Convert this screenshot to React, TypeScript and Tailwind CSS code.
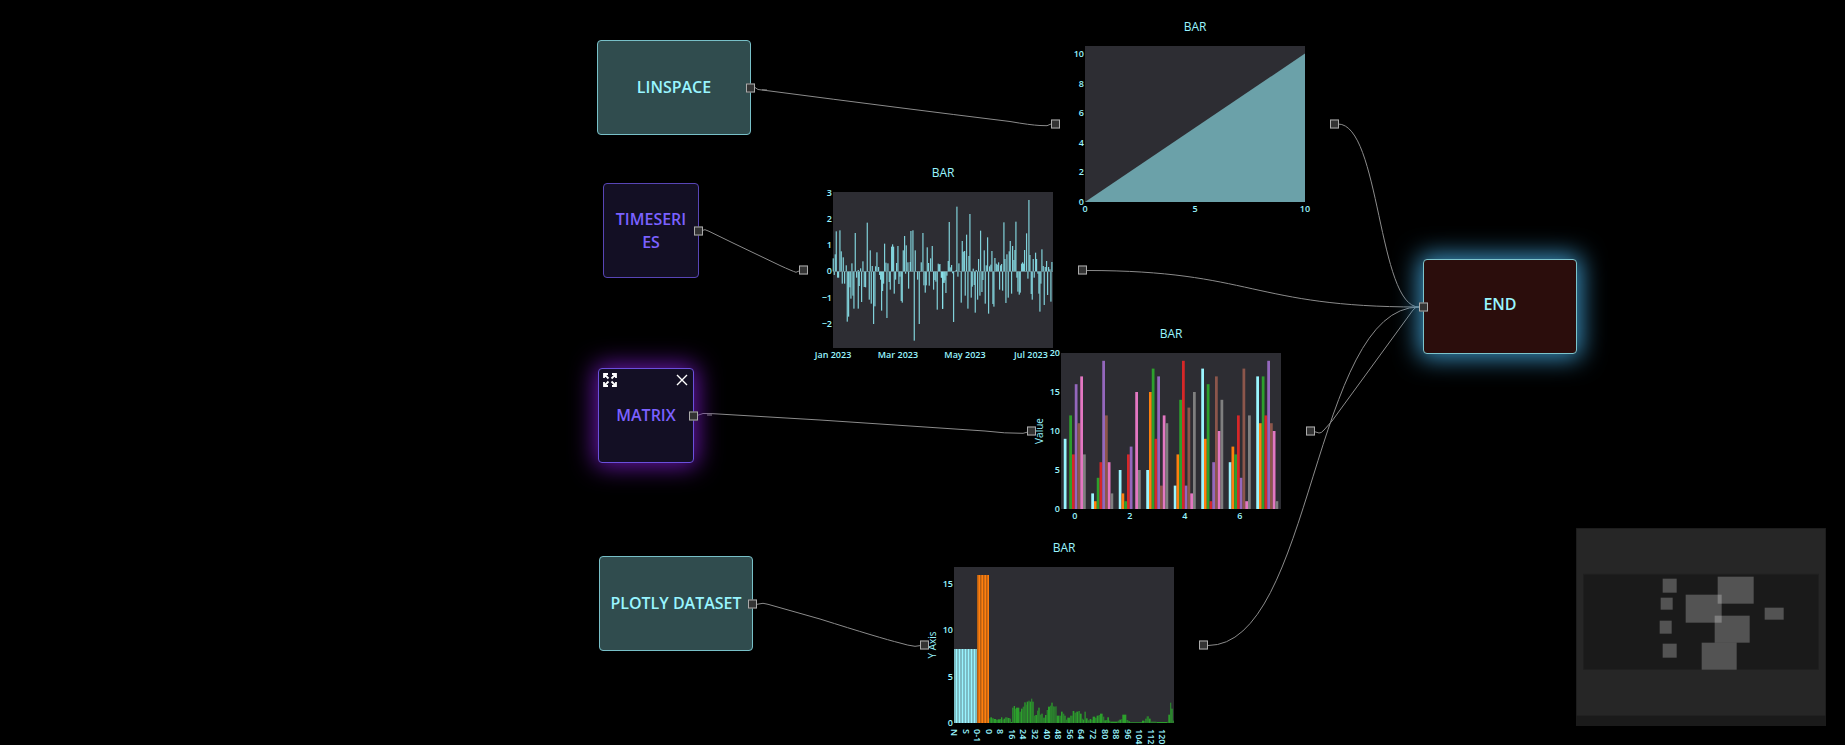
import type { ReactNode } from "react";

type Pair = [number, number];

const PLOT_W = 220;
const PLOT_H = 156;
const PLOT_X = 29;
const PLOT_Y = 27;

const palette = ["#99f5ff", "#ff7f0e", "#2ca02c", "#d62728", "#9467bd", "#8c564b", "#e377c2", "#7f7f7f"];

const matrix = [
  [9, 0, 12, 7, 16, 11, 17, 7],
  [2, 1, 4, 6, 19, 12, 6, 2],
  [5, 2, 1, 7, 8, 0, 15, 5],
  [5, 15, 18, 9, 17, 3, 12, 11],
  [3, 7, 14, 19, 3, 13, 2, 15],
  [18, 9, 16, 1, 6, 17, 10, 14],
  [6, 8, 7, 12, 4, 18, 1, 12],
  [17, 11, 17, 12, 19, 11, 10, 1],
];

// Daily values as [position, level] in thirds of a pixel; level 244 is zero.
const winter: Pair[] = [
  [11, 205], [17, 193], [20, 124], [31, 121], [35, 184], [41, 202], [50, 226], [67, 220], [77, 129], [86, 240],
  [93, 235], [100, 214], [113, 98], [122, 181], [128, 228], [138, 229], [142, 187], [147, 231], [165, 161],
  [169, 218], [175, 220], [186, 170], [189, 163], [192, 170], [201, 219], [205, 168], [221, 181], [225, 138],
  [230, 166], [235, 217], [242, 216], [244, 123], [250, 121], [257, 181], [275, 217], [280, 129], [293, 172],
  [297, 219], [303, 205], [308, 168], [326, 221], [329, 224],
  [14, 255], [24, 263], [27, 263], [38, 281], [45, 281], [53, 395], [57, 380], [61, 292], [64, 326], [70, 317],
  [73, 356], [81, 263], [86, 356], [89, 288], [96, 336], [104, 291], [108, 292], [119, 329], [125, 341],
  [132, 402], [136, 349], [150, 255], [153, 269], [156, 362], [159, 303], [162, 281], [172, 384], [179, 276],
  [182, 299], [194, 311], [198, 269], [208, 282], [211, 260], [215, 333], [218, 338], [228, 251], [237, 296],
  [254, 452], [264, 269], [269, 402], [283, 286], [287, 308], [290, 286], [299, 287], [312, 299], [316, 270],
  [319, 275], [323, 359], [336, 263], [339, 357], [343, 278],
];

const summer: Pair[] = [
  [1, 222], [26, 213], [29, 96], [32, 232], [36, 225], [50, 240], [52, 50], [58, 220], [68, 153], [71, 185],
  [75, 183], [81, 134], [88, 198], [91, 72], [101, 236], [110, 240], [117, 207], [123, 122], [134, 181],
  [140, 226], [144, 142], [150, 229], [154, 224], [157, 183], [166, 204], [170, 221], [173, 224], [177, 217],
  [183, 226], [186, 222], [193, 97], [196, 207], [202, 193], [209, 184], [212, 153], [219, 168], [223, 210],
  [226, 180], [229, 95], [246, 221], [249, 217], [252, 221], [255, 180], [261, 130], [268, 30], [271, 195],
  [281, 207], [288, 188], [291, 207], [307, 178], [311, 228], [317, 231], [321, 213], [327, 231], [331, 238],
  [337, 216],
  [5, 263], [9, 356], [13, 279], [16, 271], [19, 309], [22, 257], [39, 250], [42, 396], [55, 260], [65, 338],
  [77, 317], [85, 356], [95, 323], [98, 290], [104, 285], [107, 368], [114, 329], [121, 317], [127, 306],
  [130, 270], [137, 341], [147, 371], [160, 342], [163, 350], [180, 299], [189, 302], [199, 339], [206, 323],
  [216, 311], [232, 263], [235, 305], [239, 314], [242, 308], [265, 266], [275, 312], [278, 329], [284, 263],
  [295, 251], [298, 311], [301, 365], [304, 281], [314, 345], [324, 315], [334, 335],
];

const daily: Pair[] = [
  ...winter.map(([x, y]): Pair => [x - 10, y]),
  ...summer.map(([x, y]): Pair => [x + 320, y]),
];

// Each entry is [start, top] in thirds of a pixel; the base of the plot is 565.
const spectrum: Pair[] = [
  [238, 551], [241, 548], [246, 551], [252, 553], [258, 555], [264, 554], [270, 553], [273, 548], [277, 555],
  [281, 552], [285, 548], [293, 550], [299, 552], [303, 562], [306, 519], [311, 514], [315, 522], [318, 519],
  [328, 531], [333, 522], [338, 516], [343, 503], [347, 510], [350, 501], [355, 498], [359, 501], [363, 492],
  [367, 501], [371, 543], [376, 541], [381, 528], [385, 519], [389, 540], [394, 537], [398, 549], [405, 541],
  [410, 526], [414, 516], [420, 513], [424, 504], [428, 515], [434, 517], [436, 515], [440, 543], [448, 543],
  [453, 531], [458, 537], [463, 543], [467, 555], [472, 549], [480, 543], [488, 529], [493, 534], [499, 531],
  [505, 529], [510, 537], [515, 552], [519, 555], [523, 531], [528, 551], [533, 557], [539, 553], [544, 556],
  [548, 546], [555, 549], [560, 543], [566, 541], [570, 537], [578, 546], [583, 557], [588, 556], [592, 548],
  [597, 558], [601, 561], [623, 558], [628, 555], [634, 553], [637, 540], [649, 556], [655, 560], [660, 562],
  [696, 558], [703, 559], [706, 552], [710, 545], [717, 552], [722, 561], [740, 562], [772, 561], [775, 540],
  [780, 504], [784, 522], [788, 558], [792, 565],
];

const categoryTicks = [
  "N", "S", "0-1", "0", "8", "16", "24", "32", "40", "48", "56", "64", "72", "80", "88", "96", "104", "112", "120",
];

function Handle({ className, label }: { className: string; label: string }) {
  return (
    <span
      role="img"
      aria-label={label}
      className={`absolute top-1/2 size-[9px] -translate-y-1/2 border border-[#ababab] bg-[#333333] ${className}`}
    />
  );
}

function Node({ className, children }: { className: string; children: ReactNode }) {
  return (
    <div
      className={`absolute flex h-[95px] items-center justify-center rounded border text-center text-base leading-[23px] font-semibold ${className}`}
    >
      {children}
    </div>
  );
}

function ChartNode({
  className,
  yTicks,
  yTitle,
  xTicks = [],
  children,
}: {
  className: string;
  yTicks: [string, number][];
  yTitle?: string;
  xTicks?: [string, number][];
  children: ReactNode;
}) {
  return (
    <div className={`absolute h-[210px] w-[278px] ${className}`}>
      <svg
        className="block size-full overflow-visible"
        viewBox="0 0 278 210"
        fill="#99f5ff"
        fontSize="9"
        fontWeight="600"
      >
        <text x="139" y="12" textAnchor="middle" fontSize="12" fontWeight="500">
          BAR
        </text>
        <g transform={`translate(${PLOT_X} ${PLOT_Y})`}>
          <rect width={PLOT_W} height={PLOT_H} fill="#2d2d33" />
          {children}
          {yTicks.map(([label, y]) => (
            <text key={label} x="-1" y={y + 3} textAnchor="end">
              {label}
            </text>
          ))}
          {xTicks.map(([label, x]) => (
            <text key={label} x={x} y={PLOT_H + 10} textAnchor="middle">
              {label}
            </text>
          ))}
        </g>
        {yTitle && (
          <text transform="translate(11 105) rotate(-90)" textAnchor="middle" fontSize="10" fontWeight="500">
            {yTitle}
          </text>
        )}
      </svg>
      <Handle className="-left-[5px]" label="input" />
      <Handle className="-right-[5px]" label="output" />
    </div>
  );
}

function Edges() {
  return (
    <svg className="absolute inset-0 size-full" fill="none" stroke="#8b8b8b" strokeWidth="1" aria-hidden="true">
      <path d="M755 87.5L758 89.5L770 91Q900 108 1010 121.500Q1030 125 1040 125.500L1047 125.700L1051 124M762 89.800L767 90" />
      <path d="M702 230.500L705 229.700L709 231.300L733 243L780 265.500Q792 271 796 272.300L799 271" />
      <path d="M697 415.500L703 413.500L713 413.700L820 420L985 431Q1005 433.500 1023 433.300L1028 432M707 415L712 415" />
      <path d="M757 604.300L763 603.300L768 604.300L820 619Q880 638 900 643Q908 645.500 915 646.300L921 645.500" />
      <path d="M1338 124C1380 124 1378 307 1419 307" />
      <path d="M1087 270.500C1252 270.500 1252 307 1419 307" />
      <path d="M1314 431.500L1319 433Q1321 433.500 1324 430L1332 421L1413 310Q1415 307 1419 307" />
      <path d="M1208 645.500C1313 645.500 1313 307 1419 307" />
    </svg>
  );
}

function MiniMap() {
  const nodes = [
    [260, 152, 42, 42], [254, 209, 36, 36], [251, 278, 36, 39], [260, 347, 42, 42], [425, 146, 108, 81],
    [329, 200, 108, 84], [416, 263, 105, 81], [377, 344, 105, 81], [566, 239, 57, 36],
  ];
  return (
    <svg
      className="absolute right-[19px] bottom-[19px] h-[198px] w-[250px]"
      viewBox="0 0 750 594"
      role="img"
      aria-label="Mini map"
    >
      <rect width="750" height="594" fill="#1a1a1a" />
      <rect x="2" y="2" width="746" height="561" fill="#262626" />
      <rect x="23" y="139" width="704" height="285" fill="#1a1a1a" stroke="#202020" strokeWidth="3" />
      {nodes.map(([x, y, w, h]) => (
        <rect key={`${x}-${y}`} x={x} y={y} width={w} height={h} fill="#ffffff" fillOpacity="0.25" />
      ))}
    </svg>
  );
}

export default function App() {
  return (
    <main className="relative h-screen w-full overflow-hidden bg-black font-['Open_Sans','Noto_Sans',sans-serif]">
      <Edges />

      <Node className="top-10 left-[597px] w-[154px] border-[#78c0c8] bg-[#304c4e] text-[#99f5ff]">
        LINSPACE
        <Handle className="-right-[5px]" label="output" />
      </Node>
      <Node className="top-[183px] left-[603px] w-24 border-[#5845b6] bg-[#130f24] px-2.5 break-all text-[#7b61ff]">
        TIMESERIES
        <Handle className="-right-[5px]" label="output" />
      </Node>
      <Node className="top-[368px] left-[598px] w-24 border-[#6a50dc] bg-[#130f24] text-[#7b61ff] shadow-[0_0_24px_3px_#6a17ad]">
        MATRIX
        <button type="button" aria-label="Expand" className="absolute top-1 left-1 size-[14px] text-white">
          <svg viewBox="0 0 14 14" fill="none" stroke="currentColor" strokeWidth="1.800">
            <path d="M1 5V1H5M1 1L5.500 5.500M9 1H13V5M13 1L8.500 5.500M1 9V13H5M1 13L5.500 8.500M13 9V13H9M13 13L8.500 8.500" />
          </svg>
        </button>
        <button type="button" aria-label="Remove" className="absolute top-[5px] right-[5px] size-3 text-white">
          <svg viewBox="0 0 12 12" fill="none" stroke="currentColor" strokeWidth="1.400">
            <path d="M1 1L11 11M11 1L1 11" />
          </svg>
        </button>
        <Handle className="-right-[5px]" label="output" />
      </Node>
      <Node className="top-[556px] left-[599px] w-[154px] border-[#78c0c8] bg-[#304c4e] text-[#99f5ff]">
        PLOTLY DATASET
        <Handle className="-right-[5px]" label="output" />
      </Node>

      <ChartNode
        className="top-[19px] left-[1056px]"
        yTicks={[10, 8, 6, 4, 2, 0].map((v) => [String(v), 156 - v * 14.8])}
        xTicks={[["0", 0], ["5", 110], ["10", 220]]}
      >
        <path d="M0 156L220 7.500V156Z" fill="#6ba1a9" />
      </ChartNode>

      <ChartNode
        className="top-[165px] left-[804px]"
        yTicks={[["3", 0.5], ["2", 27], ["1", 53], ["0", 79], ["−1", 105.5], ["−2", 132]]}
        xTicks={[["Jan 2023", 0], ["Mar 2023", 65], ["May 2023", 132], ["Jul 2023", 198]]}
      >
        <g transform="scale(0.3333)" fill="#8ae2eb" fillOpacity="0.9">
          {daily.map(([x, y], i) => (
            <rect key={i} x={x - 2} y={Math.min(y, 244) - 6} width="3.6" height={Math.abs(244 - y)} />
          ))}
          <rect y="237" width="660" height="3" fill="#71929a" fillOpacity="0.8" />
        </g>
      </ChartNode>

      <ChartNode
        className="top-[326px] left-[1032px]"
        yTicks={[20, 15, 10, 5, 0].map((v) => [String(v), 156 - v * 7.8])}
        xTicks={[["0", 13.75], ["2", 68.75], ["4", 123.75], ["6", 178.75]]}
        yTitle="Value"
      >
        {matrix.map((row, r) =>
          row.map((v, c) => (
            <rect
              key={`${r}-${c}`}
              x={r * 27.5 + 2.75 + c * 2.75}
              y={156 - v * 7.8}
              width="2.75"
              height={v * 7.8}
              fill={palette[c]}
            />
          )),
        )}
      </ChartNode>

      <ChartNode
        className="top-[540px] left-[925px]"
        yTicks={[15, 10, 5, 0].map((v) => [String(v), 156 - v * 9.28])}
        yTitle="Y Axis"
      >
        <rect y="82" width="23.200" height="74" fill="#7cbcc4" />
        {Array.from({ length: 8 }, (_, i) => (
          <rect key={i} x={2 + i * 3} y="82" width="1" height="74" fill="#99f5ff" />
        ))}
        <rect x="23" y="8" width="12" height="148" fill="#b55f13" />
        {[25, 28, 31, 34].map((x) => (
          <rect key={x} x={x - 0.5} y="8" width="1.500" height="148" fill="#ff7f0e" />
        ))}
        <g transform="scale(0.3333)">
          {spectrum.slice(0, -1).map(([x, y], i) => (
            <rect
              key={x}
              x={x - 132}
              y={y - 97}
              width={spectrum[i + 1][0] - x}
              height={565 - y}
              fill={i % 2 ? "#2ca02c" : "#2b7f2e"}
            />
          ))}
        </g>
        {categoryTicks.map((label, i) => (
          <text key={label} transform={`translate(${i * 11.58 - 3} 162) rotate(90)`}>
            {label}
          </text>
        ))}
      </ChartNode>

      <Node className="top-[259px] left-[1423px] w-[154px] border-[#7cc4cc] bg-[#2b0d0c] pb-1 text-[#99f5ff] shadow-[0_0_24px_4px_#3c94c4]">
        END
        <Handle className="-left-[5px]" label="input" />
      </Node>

      <MiniMap />
    </main>
  );
}
